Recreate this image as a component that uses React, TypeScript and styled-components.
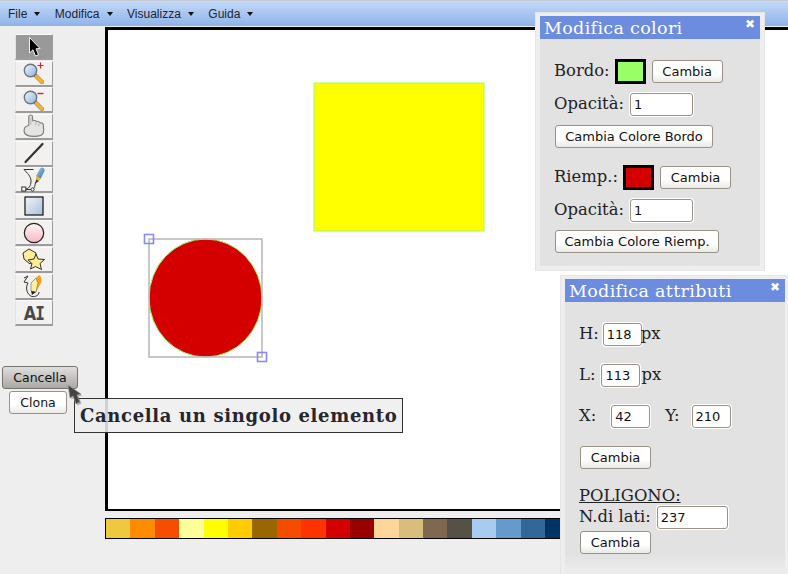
import React from "react";
import styled, { createGlobalStyle } from "styled-components";

const Global = createGlobalStyle`
  html, body { margin: 0; padding: 0; height: 100%; overflow: hidden; background: #eeeeee; }
  #root { height: 100%; }
`;

const Page = styled.div`
  position: relative;
  width: 788px;
  height: 574px;
  overflow: hidden;
  background: #eeeeee;
  font-family: "DejaVu Serif", serif;
  color: #222;
`;

const MenuBar = styled.div`
  display: flex;
  align-items: center;
  height: 25px;
  padding-left: 8px;
  gap: 14.5px;
  border-top: 1px solid #c4c8d2;
  background: linear-gradient(#c3d9f8, #8fb3e8);
  font: 12px "Liberation Sans", Arial, sans-serif;
  color: #1c2430;
`;

const MenuItem = styled.div`
  display: flex;
  align-items: center;
  gap: 7px;
  &::after {
    content: "";
    border-left: 3.5px solid transparent;
    border-right: 3.5px solid transparent;
    border-top: 4px solid #111;
  }
`;

const Main = styled.div`
  display: flex;
  align-items: flex-start;
`;

const Side = styled.div`
  width: 105px;
  flex: none;
  padding-top: 8px;
`;

const Tools = styled.div`
  display: flex;
  flex-direction: column;
  margin-left: 15px;
  width: 38px;
  gap: 0.65px;
`;

const Tool = styled.div<{ $active?: boolean }>`
  box-sizing: border-box;
  width: 38px;
  height: 26px;
  display: flex;
  align-items: center;
  justify-content: center;
  background: ${(p) => (p.$active ? "#999999" : "#f2f1f0")};
  border-top: 1px solid #fafafa;
  border-left: 1px solid #e4e4e4;
  border-right: 1px solid #9c9c9c;
  border-bottom: 2px solid #9c9c9c;
`;

const AI = styled.span`
  display: flex;
  align-items: baseline;
  color: #45484c;
  font: bold 20px "DejaVu Sans", sans-serif;
  line-height: 20px;
  transform: scaleX(0.8);
`;

const AISerif = styled.span`
  font: bold 20px "DejaVu Sans Mono", monospace;
  margin-left: -1px;
`;

const BaseButton = styled.div`
  box-sizing: border-box;
  display: flex;
  align-items: center;
  justify-content: center;
  height: 23px;
  border: 1px solid #9a9385;
  border-radius: 3px;
  background: linear-gradient(#ffffff 0%, #ffffff 60%, #e9e9e7 100%);
  font: 13px "DejaVu Sans", sans-serif;
  color: #111;
  flex: none;
`;

const DangerButton = styled(BaseButton)`
  width: 76px;
  margin: 40px 0 0 2px;
  border-color: #77746e;
  background: linear-gradient(#e0dfdd, #a9a8a5);
  font-size: 12.5px;
`;

const CloneButton = styled(BaseButton)`
  width: 58px;
  margin: 2px 0 0 9px;
  font-size: 12.5px;
`;

const ChangeButton = styled(BaseButton)`
  width: 71px;
  margin-left: 1px;
`;

const WideButton = styled(BaseButton)<{ $w: number }>`
  width: ${(p) => p.$w}px;
  margin-left: 1px;
`;

const CanvasColumn = styled.div`
  flex: none;
  width: 800px;
  padding-top: 1px;
`;

const Canvas = styled.div`
  box-sizing: border-box;
  width: 800px;
  height: 484px;
  border: 3px solid #000;
  border-bottom-width: 2px;
  background: #fff;
`;

const Palette = styled.div`
  display: flex;
  box-sizing: border-box;
  margin-top: 7px;
  height: 21px;
  width: 700px;
  border: 1px solid #000;
`;

const Swatch = styled.div<{ $c: string }>`
  width: 24.4px;
  flex: none;
  background: ${(p) => p.$c};
`;

const Tooltip = styled.div`
  position: absolute;
  left: 74px;
  top: 398px;
  box-sizing: border-box;
  width: 329px;
  height: 35px;
  display: flex;
  align-items: center;
  padding-left: 5px;
  border: 1px solid #333;
  background: rgba(238, 238, 238, 0.88);
  font: bold 18px "DejaVu Serif", serif;
  letter-spacing: 0.66px;
  color: #26262e;
  white-space: nowrap;
`;

const Cursor = styled.svg`
  position: absolute;
  left: 66px;
  top: 384px;
`;

const Panel = styled.div<{ $x: number; $y: number; $w: number; $h: number }>`
  position: absolute;
  left: ${(p) => p.$x}px;
  top: ${(p) => p.$y}px;
  width: ${(p) => p.$w}px;
  height: ${(p) => p.$h}px;
  box-sizing: border-box;
  padding: 3px 4px 4px;
  background: #eeeeee;
  border: 1px solid #e6e6e6;
  display: flex;
  flex-direction: column;
`;

const TitleBar = styled.div`
  flex: none;
  height: 23px;
  display: flex;
  align-items: center;
  justify-content: space-between;
  padding: 0 5px 0 4px;
  background: #6c8cdf;
  color: #fff;
  font: 17.5px "DejaVu Serif", serif;
  letter-spacing: 0.33px;
  white-space: nowrap;
`;

const Close = styled.span`
  font: bold 12px "DejaVu Sans", sans-serif;
  letter-spacing: 0;
  margin-top: -7px;
`;

const PanelBody = styled.div<{ $gap: number; $pt: number; $pl: number }>`
  flex: 1;
  display: flex;
  flex-direction: column;
  gap: ${(p) => p.$gap}px;
  padding: ${(p) => p.$pt}px 0 0 ${(p) => p.$pl}px;
  background: #e2e2e2;
  font: 16.4px "DejaVu Serif", serif;
  color: #222;
  overflow: hidden;
`;

const Row = styled.div<{ $mt?: number; $gap?: number }>`
  display: flex;
  align-items: center;
  flex: none;
  height: 23px;
  gap: ${(p) => p.$gap ?? 6}px;
  margin-top: ${(p) => p.$mt ?? 0}px;
  white-space: nowrap;
`;

const Label = styled.span<{ $mr?: number }>`
  flex: none;
  margin-top: -2px;
  margin-right: ${(p) => p.$mr ?? 0}px;
`;

const Unit = styled.span`
  flex: none;
  margin: -2px 0 0 -5px;
`;

const ColorBox = styled.div<{ $c: string }>`
  box-sizing: border-box;
  width: 31px;
  height: 25px;
  border: 3px solid #000;
  background: ${(p) => p.$c};
  flex: none;
`;

const Field = styled.input<{ $w: number }>`
  box-sizing: border-box;
  width: ${(p) => p.$w}px;
  height: 23px;
  padding: 0 0 0 3px;
  border: 1px solid #9a9385;
  border-radius: 3px;
  background: #fff;
  box-shadow: 0 0 0 1px #fff;
  font: 13px "DejaVu Sans", sans-serif;
  color: #111;
  outline: none;
  flex: none;
`;

const Heading = styled.div`
  text-decoration: underline;
  line-height: 18px;
`;

const Fade = styled.div`
  position: absolute;
  left: 0;
  right: 0;
  bottom: 0;
  height: 26px;
  background: linear-gradient(rgba(238, 238, 238, 0), #eeeeee 90%);
`;

const colors = [
  "#efc83f", "#ff8c00", "#f74d00", "#ffff99", "#ffff00", "#ffcc00", "#996600",
  "#f74c00", "#ff3300", "#d40000", "#990000", "#ffd699", "#d9bd7a", "#806850",
  "#555147", "#a8ccef", "#6699cc", "#336699", "#003366", "#001f4d",
];

const Lens = ({ sign }: { sign: "+" | "-" }) => (
  <svg width="26" height="24" viewBox="0 0 26 24">
    <defs>
      <linearGradient id={"lens" + sign} x1="0" y1="0" x2="1" y2="1">
        <stop offset="0" stopColor="#eef6fd" />
        <stop offset="1" stopColor="#8db4dd" />
      </linearGradient>
    </defs>
    <path d="M13.5 13.5L21 21" stroke="#777" strokeWidth="4" strokeLinecap="round" />
    <path d="M15.5 15.5L21 21" stroke="#f2b330" strokeWidth="3.4" strokeLinecap="round" />
    <circle cx="9.5" cy="9.5" r="6.2" fill={`url(#lens${sign})`} stroke="#6d747c" strokeWidth="1.4" />
    {sign === "+" ? (
      <path d="M19.5 1.5v6M16.5 4.5h6" stroke="#d8222a" strokeWidth="1.2" />
    ) : (
      <path d="M16.5 5.5h6" stroke="#d8222a" strokeWidth="1.4" />
    )}
  </svg>
);

const Arrow = () => (
  <svg width="14" height="22" viewBox="0 0 14 22">
    <path d="M2.5 1.5L2.5 17L6 13.8L8.5 20L11.5 18.8L9 12.8L13 12.5Z" fill="#000" stroke="#fff" strokeWidth="0.9" />
  </svg>
);

const Hand = () => (
  <svg width="24" height="24" viewBox="0 0 21 23">
    <path
      d="M5.5 2.5C5.5 .5 9 .5 9 2.5L9.3 6.5C11 6 12.5 6.2 13 7.3C14.8 7 16 7.5 16.3 8.5C18 8.2 19.5 9 19.5 11C19.8 14 20 16 19.5 18C18.5 21 14 21.5 10.5 21.5C5 21.5 1 20 1 16C1 13.5 2 11.5 5.5 11Z"
      fill="#e4e4e0"
      stroke="#7f807a"
      strokeWidth="1.1"
    />
    <path d="M7.5 3L7.5 10M12 8L12 11M15 9L15 11.5" stroke="#c6c6c1" strokeWidth="1.5" />
  </svg>
);

const Line = () => (
  <svg width="24" height="24" viewBox="0 0 24 24">
    <path d="M3.5 21L20.5 3" stroke="#333" strokeWidth="2.2" strokeLinecap="round" />
  </svg>
);

const PathTool = () => (
  <svg width="26" height="26" viewBox="0 0 26 26">
    <defs>
      <linearGradient id="pen" x1="0" y1="0" x2="1" y2="1">
        <stop offset="0" stopColor="#a8d2ef" />
        <stop offset="1" stopColor="#2d6e9c" />
      </linearGradient>
    </defs>
    <path d="M3 2.5H12.5M3 2.5C6 6 10 9 10 14C10 19 8 22 3 22.5" fill="none" stroke="#333" strokeWidth="1" />
    <path d="M3 22.5H11.5C14 21 14 18 14.5 15" fill="none" stroke="#333" strokeWidth="1" />
    <rect x="0.8" y="20" width="4" height="4" fill="#fff" stroke="#333" strokeWidth="1" />
    <circle cx="11.5" cy="22.5" r="1.6" fill="#fff" stroke="#333" strokeWidth="1" />
    <path d="M15 9L19 1.5C21 -0.5 24 1 23.5 4L19.5 12Z" fill="url(#pen)" />
    <path d="M15 9L19.5 12L18 14L15 12.5Z" fill="#f2b330" />
    <path d="M15 12.5L18 14L14.5 16.5Z" fill="#333" />
  </svg>
);

const RectTool = () => (
  <svg width="20" height="20" viewBox="0 0 20 20">
    <defs>
      <linearGradient id="rg" x1="0" y1="0" x2="1" y2="1">
        <stop offset="0" stopColor="#f2f6fa" />
        <stop offset="1" stopColor="#a7bfd9" />
      </linearGradient>
    </defs>
    <rect x="1" y="1" width="18" height="18" fill="url(#rg)" stroke="#111" strokeWidth="1.2" />
  </svg>
);

const CircleTool = () => (
  <svg width="22" height="22" viewBox="0 0 22 22">
    <defs>
      <linearGradient id="cg" x1="0" y1="0" x2="0" y2="1">
        <stop offset="0" stopColor="#fff6f7" />
        <stop offset="1" stopColor="#f9b6c2" />
      </linearGradient>
    </defs>
    <circle cx="11" cy="11" r="9.7" fill="url(#cg)" stroke="#222" strokeWidth="1.2" />
  </svg>
);

const StarTool = () => (
  <svg width="24" height="24" viewBox="0 0 24 24">
    <path d="M7 1L14 5L13 12L8 16L2 11L1 5Z" fill="#fdee96" stroke="#333" strokeWidth="1" />
    <path d="M14 6L16 11L22.5 11.5L18 15.5L19.5 21.5L13.5 18.5L8.5 21L10 15.5L6 12L12 11Z" fill="#fdee96" stroke="#333" strokeWidth="1" />
  </svg>
);

const FreeTool = () => (
  <svg width="24" height="24" viewBox="0 0 24 24">
    <path d="M2 4L6 2L2 8L6 9C3 14 5 21 10 22.5C14 23 17 21 17 18" fill="none" stroke="#333" strokeWidth="1" />
    <path d="M9 9L17 1C20 3 20 7 19 9L14 18L9 17Z" fill="#f4a21f" />
    <path d="M9 9L14 4L16 9L14 18L9 17Z" fill="#fdeea6" stroke="#8a7a45" strokeWidth="0.7" />
    <path d="M9 17L14 18L10 21Z" fill="#222" />
  </svg>
);

export default function App() {
  return (
    <Page>
      <Global />
      <MenuBar>
        <MenuItem>File</MenuItem>
        <MenuItem>Modifica</MenuItem>
        <MenuItem>Visualizza</MenuItem>
        <MenuItem>Guida</MenuItem>
      </MenuBar>
      <Main>
        <Side>
          <Tools>
            <Tool $active><Arrow /></Tool>
            <Tool><Lens sign="+" /></Tool>
            <Tool><Lens sign="-" /></Tool>
            <Tool><Hand /></Tool>
            <Tool><Line /></Tool>
            <Tool><PathTool /></Tool>
            <Tool><RectTool /></Tool>
            <Tool><CircleTool /></Tool>
            <Tool><StarTool /></Tool>
            <Tool><FreeTool /></Tool>
            <Tool><AI><span>A</span><AISerif>I</AISerif></AI></Tool>
          </Tools>
          <DangerButton>Cancella</DangerButton>
          <CloneButton>Clona</CloneButton>
        </Side>
        <CanvasColumn>
          <Canvas>
            <svg width="794" height="479" viewBox="108 30 794 479" style={{ display: "block" }}>
              <rect x="314" y="83" width="170" height="148" fill="#ffff00" stroke="#99ff66" strokeWidth="1" />
              <ellipse cx="205.5" cy="298" rx="56.5" ry="59" fill="#d40000" stroke="#99ff66" strokeWidth="1" />
              <rect x="149" y="239" width="113" height="118" fill="none" stroke="#bbbbbb" strokeWidth="1.6" />
              <rect x="144.5" y="234.5" width="9" height="9" fill="none" stroke="#8888ff" strokeWidth="1.6" />
              <rect x="257.5" y="352.5" width="9" height="9" fill="none" stroke="#8888ff" strokeWidth="1.6" />
            </svg>
          </Canvas>
          <Palette>
            {colors.map((c, i) => (
              <Swatch key={i} $c={c} />
            ))}
          </Palette>
        </CanvasColumn>
      </Main>

      <Tooltip>Cancella un singolo elemento</Tooltip>
      <Cursor width="20" height="24" viewBox="0 0 20 24">
        <path d="M2 1L4 14L7 12L10 20L14 18L11 11L15 10Z" fill="#000" opacity="0.25" transform="translate(1.5 1.5)" />
        <path d="M2 1L4 14L7 12L10 20L14 18L11 11L15 10Z" fill="#444" stroke="#999" strokeWidth="0.7" />
      </Cursor>

      <Panel $x={535} $y={12} $w={230} $h={259}>
        <TitleBar>
          Modifica colori
          <Close>✖</Close>
        </TitleBar>
        <PanelBody $gap={9} $pt={21} $pl={14}>
          <Row $gap={5}>
            <Label>Bordo:</Label>
            <ColorBox $c="#99ff66" />
            <ChangeButton>Cambia</ChangeButton>
          </Row>
          <Row $mt={1}>
            <Label>Opacità:</Label>
            <Field $w={63} readOnly value="1" />
          </Row>
          <Row>
            <WideButton $w={158}>Cambia Colore Bordo</WideButton>
          </Row>
          <Row $mt={9} $gap={5}>
            <Label>Riemp.:</Label>
            <ColorBox $c="#d40000" />
            <ChangeButton>Cambia</ChangeButton>
          </Row>
          <Row $mt={1}>
            <Label>Opacità:</Label>
            <Field $w={63} readOnly value="1" />
          </Row>
          <Row $mt={-1}>
            <WideButton $w={164}>Cambia Colore Riemp.</WideButton>
          </Row>
        </PanelBody>
      </Panel>

      <Panel $x={560} $y={275} $w={230} $h={305}>
        <TitleBar>
          Modifica attributi
          <Close>✖</Close>
        </TitleBar>
        <PanelBody $gap={18} $pt={21} $pl={14}>
          <Row $gap={4}>
            <Label>H:</Label>
            <Field $w={39} readOnly value="118" />
            <Unit>px</Unit>
          </Row>
          <Row>
            <Label>L:</Label>
            <Field $w={39} readOnly value="113" />
            <Unit>px</Unit>
          </Row>
          <Row $gap={15}>
            <Label>X:</Label>
            <Field $w={39} readOnly value="42" />
            <Label $mr={-3}>Y:</Label>
            <Field $w={39} readOnly value="210" />
          </Row>
          <Row>
            <WideButton $w={71}>Cambia</WideButton>
          </Row>
          <div>
            <Heading>POLIGONO:</Heading>
            <Row $mt={1}>
              <Label>N.di lati:</Label>
              <Field $w={71} readOnly value="237" />
            </Row>
            <Row $mt={2}>
              <WideButton $w={71}>Cambia</WideButton>
            </Row>
          </div>
        </PanelBody>
        <Fade />
      </Panel>
    </Page>
  );
}
